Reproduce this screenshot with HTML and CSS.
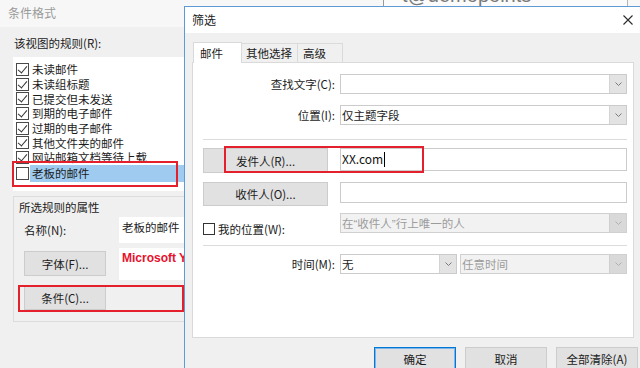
FILE: index.html
```html
<!DOCTYPE html>
<html lang="zh-CN">
<head>
<meta charset="UTF-8">
<title>条件格式 - 筛选</title>
<link rel="stylesheet" href="styles.css">
</head>
<body>
<div class="desktop">

  <!-- background window: conditional formatting -->
  <div class="main-win">
    <div class="main-title">条件格式</div>
    <div class="main-body">
      <div class="rules-label">该视图的规则(R):</div>
      <div class="rule-list">
        <div class="rule"><span class="check on"></span><span class="rule-name">未读邮件</span></div>
        <div class="rule"><span class="check on"></span><span class="rule-name">未读组标题</span></div>
        <div class="rule"><span class="check on"></span><span class="rule-name">已提交但未发送</span></div>
        <div class="rule"><span class="check on"></span><span class="rule-name">到期的电子邮件</span></div>
        <div class="rule"><span class="check on"></span><span class="rule-name">过期的电子邮件</span></div>
        <div class="rule"><span class="check on"></span><span class="rule-name">其他文件夹的邮件</span></div>
        <div class="rule"><span class="check on"></span><span class="rule-name">网站邮箱文档等待上载</span></div>
        <div class="rule selected"><span class="check"></span><span class="rule-name">老板的邮件</span></div>
      </div>

      <div class="props">
        <div class="props-title">所选规则的属性</div>
        <div class="props-grid">
          <div class="props-label">名称(N):</div>
          <div class="name-field">老板的邮件</div>
          <button class="btn props-btn font-btn">字体(F)...</button>
          <div class="font-preview">Microsoft YaHei</div>
          <button class="btn props-btn">条件(C)...</button>
          <div></div>
        </div>
      </div>
    </div>
    <div class="mark mark-rule"></div>
    <div class="mark mark-cond"></div>
  </div>

  <div class="peek-win"><span>t@demopoints</span></div>

  <!-- filter dialog -->
  <div class="dialog">
    <div class="dlg-title">
      <span>筛选</span>
      <svg class="close" width="10" height="10" viewBox="0 0 10 10"><path d="M0.5 0.5 L9.5 9.5 M9.5 0.5 L0.5 9.5" stroke="#2b2b2b" stroke-width="1.1" fill="none"/></svg>
    </div>
    <div class="dlg-body">
      <div class="tabs">
        <div class="tab active tab-mail">邮件</div>
        <div class="tab tab-other">其他选择</div>
        <div class="tab tab-adv">高级</div>
      </div>
      <div class="panel">
        <div class="form-row row-find">
          <div class="field-label">查找文字(C):</div>
          <div class="combo">
            <span class="combo-text"></span>
            <span class="combo-btn"><svg width="7" height="4" viewBox="0 0 7 4"><path d="M0.5 0.5 L3.5 3.5 L6.5 0.5" stroke="#7a7a7a" fill="none"/></svg></span>
          </div>
        </div>
        <div class="form-row row-where">
          <div class="field-label">位置(I):</div>
          <div class="combo">
            <span class="combo-text">仅主题字段</span>
            <span class="combo-btn"><svg width="7" height="4" viewBox="0 0 7 4"><path d="M0.5 0.5 L3.5 3.5 L6.5 0.5" stroke="#7a7a7a" fill="none"/></svg></span>
          </div>
        </div>

        <div class="sep sep-top"></div>

        <div class="form-row row-from">
          <button class="btn field-btn from-btn">发件人(R)...</button>
          <div class="text-field from-field">XX.com<span class="caret"></span></div>
        </div>
        <div class="form-row row-to">
          <button class="btn field-btn to-btn">收件人(O)...</button>
          <div class="text-field to-field"></div>
        </div>
        <div class="form-row row-me">
          <div class="me-label"><span class="box"></span>我的位置(W):</div>
          <div class="combo disabled">
            <span class="combo-text">在<span class="latin">“</span>收件人<span class="latin">”</span>行上唯一的人</span>
            <span class="combo-btn"><svg width="7" height="4" viewBox="0 0 7 4"><path d="M0.5 0.5 L3.5 3.5 L6.5 0.5" stroke="#b0b0b0" fill="none"/></svg></span>
          </div>
        </div>

        <div class="sep sep-bottom"></div>

        <div class="form-row row-time">
          <div class="field-label">时间(M):</div>
          <div class="time-fields">
            <div class="combo time-combo">
              <span class="combo-text">无</span>
              <span class="combo-btn"><svg width="7" height="4" viewBox="0 0 7 4"><path d="M0.5 0.5 L3.5 3.5 L6.5 0.5" stroke="#7a7a7a" fill="none"/></svg></span>
            </div>
            <div class="combo disabled range-combo">
              <span class="combo-text">任意时间</span>
              <span class="combo-btn"><svg width="7" height="4" viewBox="0 0 7 4"><path d="M0.5 0.5 L3.5 3.5 L6.5 0.5" stroke="#b0b0b0" fill="none"/></svg></span>
            </div>
          </div>
        </div>

        <div class="mark mark-from"></div>
      </div>

      <div class="dlg-buttons">
        <button class="btn dlg-btn default">确定</button>
        <button class="btn dlg-btn">取消</button>
        <button class="btn dlg-btn">全部清除(A)</button>
      </div>
    </div>
  </div>

</div>
</body>
</html>
```

FILE: styles.css
```css
:root {
  --win-bg: #f0f0f0;
  --line: #dadada;
  --field-line: #cbcbcb;
  --btn-bg: #e1e1e1;
  --btn-line: #cccccc;
  --mark-red: #e3202c;
  --text: #1b1b1b;
}

* {
  margin: 0;
  padding: 0;
  box-sizing: border-box;
}

body {
  font-family: "Noto Sans CJK SC", "Microsoft YaHei", sans-serif;
  font-size: 11.5px;
  line-height: 16px;
  color: var(--text);
  background: var(--win-bg);
}

.desktop {
  position: relative;
  width: 640px;
  height: 368px;
  overflow: hidden;
}

/* ---------- background window ---------- */

.main-win {
  position: relative;
  height: 100%;
  background: var(--win-bg);
}

.main-title {
  height: 27px;
  line-height: 26px;
  padding-left: 8px;
  font-size: 12px;
  color: #9a9a9a;
  background: #f7f7f7;
}

.main-body {
  padding-left: 13px;
}

.rules-label {
  margin-top: 8px;
  margin-left: 1px;
}

.rule-list {
  margin-top: 6px;
  width: 190px;
  background: #fff;
  padding: 5px 0 9px 3px;
}

.rule {
  display: flex;
  align-items: center;
  height: 14.7px;
}

.check {
  position: relative;
  flex: none;
  width: 13px;
  height: 13px;
  border: 1px solid #4a4a4a;
  background: #fff;
}

.check.on::after {
  content: "";
  position: absolute;
  left: 3px;
  top: 0px;
  width: 4px;
  height: 8px;
  border-right: 1px solid #333;
  border-bottom: 1px solid #333;
  transform: rotate(40deg);
}

.rule-name {
  margin-left: 3px;
  white-space: nowrap;
  line-height: 14px;
}

.rule.selected {
  height: 17px;
}

.rule.selected .rule-name {
  flex: 1;
  margin-left: 1px;
  padding-left: 2px;
  height: 17px;
  line-height: 17px;
  background: #9fcbf0;
}

.props {
  margin-top: 5px;
  width: 200px;
  border: 1px solid #dcdcdc;
  border-right: none;
  padding: 2px 0 12px 10px;
}

.props-title {
  margin-left: -5px;
}

.props-grid {
  margin-top: 2px;
  display: grid;
  grid-template-columns: 95px 80px;
  grid-template-rows: 26px 32px 24px;
  row-gap: 5px;
  align-items: center;
}

.props-grid > :nth-child(5),
.props-grid > :nth-child(6) {
  margin-top: 2px;
}

.name-field {
  align-self: stretch;
  background: #fff;
  padding: 2px 0 0 3px;
}

.font-preview {
  align-self: stretch;
  background: #fff;
  padding: 2px 3px;
  font-family: "Liberation Sans", Arial, sans-serif;
  font-weight: bold;
  font-size: 12px;
  color: #e8112d;
  white-space: nowrap;
  overflow: hidden;
}

.btn {
  font: inherit;
  color: var(--text);
  background: var(--btn-bg);
  border: 1px solid var(--btn-line);
}

.props-btn {
  width: 82px;
  height: 24px;
}

.font-btn {
  height: 25px;
}

.mark {
  position: absolute;
  border: 2px solid var(--mark-red);
}

.mark-rule {
  left: 12px;
  top: 161px;
  width: 166px;
  height: 26px;
}

.mark-cond {
  left: 18px;
  top: 285px;
  width: 166px;
  height: 27px;
}

/* window peeking above the dialog */
.peek-win {
  position: absolute;
  left: 383px;
  top: 0;
  width: 245px;
  height: 6px;
  overflow: hidden;
  background: #fbfbfb;
  border-left: 1px solid #9a9a9a;
  border-right: 1px solid #b5b5b5;
}

.peek-win span {
  display: block;
  margin: -15px 0 0 18px;
  font-family: "Liberation Sans", Arial, sans-serif;
  font-size: 20px;
  line-height: 20px;
  color: #7a7a7a;
}

/* ---------- filter dialog ---------- */

.dialog {
  position: absolute;
  left: 184px;
  top: 6px;
  width: 462px;
  height: 380px;
  border: 1px solid #5d9ad6;
  background: var(--win-bg);
}

.dlg-title {
  height: 26px;
  display: flex;
  align-items: center;
  justify-content: space-between;
  padding: 0 12px 0 7px;
  background: #fff;
  font-size: 12px;
}

.dlg-body {
  padding: 9px 7px 0 7px;
}

.tabs {
  position: relative;
  z-index: 1;
  display: flex;
  align-items: flex-end;
  height: 21px;
  margin: 0 0 -1px 1px;
}

.tab {
  height: 19px;
  line-height: 18px;
  margin-bottom: 1px;
  margin-right: -1px;
  padding-left: 5px;
  border: 1px solid var(--line);
  border-bottom: none;
  background: var(--win-bg);
}

.tab.active {
  height: 21px;
  line-height: 20px;
  margin-bottom: 0;
  background: #fff;
}

.tab-mail { width: 49px; padding-left: 6px; }
.tab-other { width: 57px; padding-left: 4px; }
.tab-adv { width: 46px; }

.panel {
  position: relative;
  width: 442px;
  height: 276px;
  background: #fff;
  border: 1px solid var(--line);
  padding: 11px 6px 0 10px;
}

.form-row {
  display: grid;
  grid-template-columns: 132px 287px;
  column-gap: 5px;
  align-items: center;
}

.field-label {
  text-align: right;
}

.row-where { margin-top: 11px; }
.row-from { margin-top: 8px; align-items: start; }
.row-to { margin-top: 9px; align-items: start; }
.row-me { margin-top: 7px; }
.row-time { margin-top: 8px; }

.sep {
  height: 1px;
  background: #dcdcdc;
}

.sep-top { margin-top: 14px; }
.sep-bottom { margin-top: 12px; }

.combo {
  display: flex;
  height: 20px;
  border: 1px solid var(--field-line);
  background: #fff;
}

.combo-text {
  flex: 1;
  padding-left: 1px;
  line-height: 18px;
  white-space: nowrap;
  overflow: hidden;
}

.combo-btn {
  flex: none;
  width: 17px;
  display: flex;
  align-items: center;
  justify-content: center;
  background: #e3e3e3;
  border-left: 1px solid #d4d4d4;
}

.combo.disabled {
  background: #f2f2f2;
  border-color: #d0d0d0;
  color: #9c9c9c;
}

.combo.disabled .combo-btn {
  background: #d9d9d9;
  border-left-color: #cfcfcf;
}

.latin {
  font-family: "Liberation Sans", Arial, sans-serif;
}

.field-btn {
  width: 125px;
  height: 24px;
}

.from-btn {
  height: 25px;
}

.text-field {
  height: 23px;
  border: 1px solid var(--field-line);
  padding: 2px 0 0 1px;
  line-height: 16px;
  font-size: 12px;
  color: #111;
}

.to-field {
  height: 21px;
}

.caret {
  display: inline-block;
  width: 1px;
  height: 15px;
  margin-left: 1px;
  vertical-align: -3px;
  background: #000;
}

.me-label {
  display: flex;
  align-items: center;
  align-self: end;
  margin-bottom: -4px;
  white-space: nowrap;
}

.box {
  width: 12px;
  height: 12px;
  margin-right: 3px;
  border: 1px solid #333;
  background: #fff;
}

.time-fields {
  display: flex;
  gap: 3px;
}

.time-combo {
  width: 117px;
}

.range-combo {
  flex: 1;
}

.mark-from {
  left: 31px;
  top: 83px;
  width: 200px;
  height: 27px;
}

.dlg-buttons {
  display: flex;
  justify-content: flex-end;
  gap: 9px;
  margin-top: 9px;
}

.dlg-btn {
  width: 82px;
  height: 24px;
}

.dlg-btn.default {
  border-color: #0078d7;
  box-shadow: inset 0 0 0 1px #7fb4e6;
}
```
